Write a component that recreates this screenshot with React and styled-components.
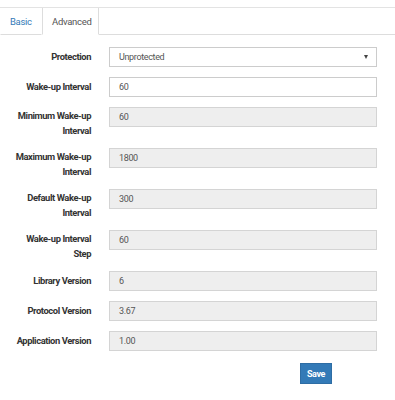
import styled, { createGlobalStyle } from "styled-components";

const GlobalStyle = createGlobalStyle`
  body {
    margin: 0;
    background: #fff;
    font-family: Roboto, "Liberation Sans", sans-serif;
    color: #333;
  }
`;

const Panel = styled.div`
  margin-top: 7px;
  border-top: 1px solid #e3e3e3;
`;

const TabBar = styled.div`
  display: flex;
  height: 26px;
  border-bottom: 1px solid #ddd;
`;

const Tab = styled.div`
  display: flex;
  align-items: center;
  padding: 0 9px;
  margin-bottom: -1px;
  font-size: 9.5px;
  letter-spacing: -0.3px;
  color: ${(p) => (p.active ? "#555" : "#337ab7")};
  background: #fff;
  border-left: 1px solid ${(p) => (p.active ? "#ddd" : "transparent")};
  border-right: 1px solid ${(p) => (p.active ? "#ddd" : "transparent")};
  border-bottom: 1px solid ${(p) => (p.active ? "#fff" : "#ddd")};
  width: ${(p) => p.width}px;
  box-sizing: border-box;
`;

const Form = styled.div`
  display: flex;
  flex-direction: column;
  gap: 10px;
  padding: 12px 18px 0 0;
`;

const Row = styled.div`
  display: grid;
  grid-template-columns: 91px 1fr;
  column-gap: 18px;
  align-items: start;
`;

const Label = styled.div`
  text-align: right;
  font-weight: bold;
  font-size: 9.4px;
  letter-spacing: -0.42px;
  line-height: ${(p) => (p.multi ? "14.5px" : "14px")};
  padding-left: 12px;
  padding-top: ${(p) => (p.multi ? "2px" : "3px")};
  color: #333;
`;

const Field = styled.div`
  height: 20px;
  box-sizing: border-box;
  border: 1px solid ${(p) => (p.disabled ? "#d4d4d4" : "#ccc")};
  background: ${(p) => (p.disabled ? "#eee" : "#fff")};
  padding: 0 9px;
  display: flex;
  align-items: center;
  justify-content: space-between;
  font-size: 9px;
  letter-spacing: -0.35px;
  color: #555;
`;

const Caret = styled.span`
  width: 0;
  height: 0;
  border-left: 2.5px solid transparent;
  border-right: 2.5px solid transparent;
  border-top: 4px solid #444;
  margin-right: -1px;
`;

const Actions = styled.div`
  display: flex;
  justify-content: flex-end;
  padding: 2px 45px 0 0;
`;

const SaveButton = styled.button`
  width: 32px;
  height: 21px;
  padding: 0;
  border: 1px solid #2e6da4;
  background: #337ab7;
  color: #fff;
  font-family: Roboto, "Liberation Sans", sans-serif;
  font-weight: bold;
  font-size: 9px;
  letter-spacing: -0.4px;
`;

const fields = [
  { label: "Minimum Wake-up Interval", value: "60", multi: true },
  { label: "Maximum Wake-up Interval", value: "1800", multi: true },
  { label: "Default Wake-up Interval", value: "300", multi: true },
  { label: "Wake-up Interval Step", value: "60", multi: true },
  { label: "Library Version", value: "6" },
  { label: "Protocol Version", value: "3.67" },
  { label: "Application Version", value: "1.00" },
];

export default function App() {
  return (
    <>
      <GlobalStyle />
      <Panel>
        <TabBar>
          <Tab width={42}>Basic</Tab>
          <Tab active width={57}>Advanced</Tab>
        </TabBar>
        <Form>
          <Row>
            <Label>Protection</Label>
            <Field>
              <span>Unprotected</span>
              <Caret />
            </Field>
          </Row>
          <Row>
            <Label>Wake-up Interval</Label>
            <Field>60</Field>
          </Row>
          {fields.map((f) => (
            <Row key={f.label}>
              <Label multi={f.multi}>{f.label}</Label>
              <Field disabled>{f.value}</Field>
            </Row>
          ))}
          <Actions>
            <SaveButton>Save</SaveButton>
          </Actions>
        </Form>
      </Panel>
    </>
  );
}
